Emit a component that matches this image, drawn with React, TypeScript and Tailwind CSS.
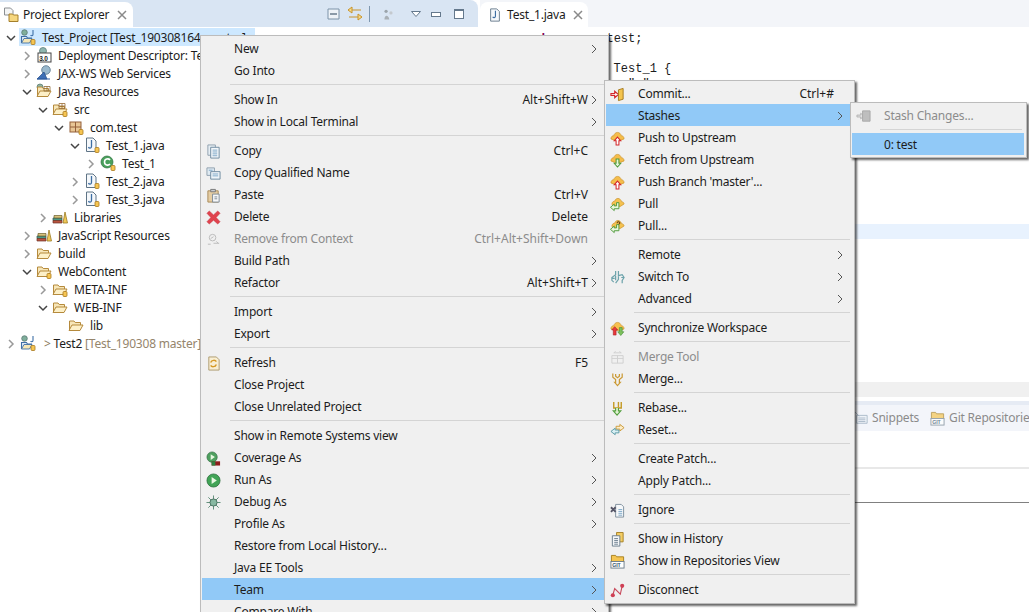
import type { ReactNode } from "react";

const Svg = ({ children, className = "w-4 h-4" }: { children: ReactNode; className?: string }) => (
  <svg viewBox="0 0 16 16" className={`${className} shrink-0`} fill="none">
    {children}
  </svg>
);

const Badge = () => <rect x="11" y="10.5" width="4" height="5" rx="1" fill="#f6c552" stroke="#a8791f" strokeWidth="0.8" />;
const Jay = ({ x = 0, y = 0 }: { x?: number; y?: number }) => (
  <path d={`M${8.5 + x} ${3 + y}V${9.5 + y}C${8.5 + x} ${11.5 + y} ${6 + x} ${11.5 + y} ${5.5 + x} ${10 + y}`} stroke="#3e6ea3" strokeWidth="1.3" />
);
const FolderBase = () => (
  <>
    <path d="M1.5 13.5V4h4.5l1.2 1.5h5.3V8" stroke="#b58a3c" fill="#f7e6b8" />
    <path d="M1 13.5 4 8h11l-3 5.5z" fill="#fdf0c8" stroke="#b58a3c" />
  </>
);
const Cloud = ({ color = "#f5bd4b" }: { color?: string }) => (
  <path d="M1 8.5C1 5.500 3 5 4 5 4.500 3 6 1.500 8 1.500s3.600 1.500 4 3.500c1.500 0 3 1 3 3.500L11 10H5z" fill={color} stroke="#c98f25" strokeWidth="0.7" />
);
const Up = ({ x = 5 }: { x?: number }) => (
  <path d={`M${x + 3} 6.500l3.500 4h-2v4.500h-3v-4.500h-2z`} fill="#fff" stroke="#d3272b" strokeWidth="1.100" />
);
const Left = () => <path d="M7 7.500v3.500h-2.500v-2l-4 3.500 4 3.500v-2h5v-6.500z" fill="#e8f7dc" stroke="#4f9a3c" strokeWidth="1" transform="translate(0 -1.500)" />;
const Gate = () => (
  <g>
    <circle cx="4.500" cy="3.500" r="2.800" fill="#7fae9b" stroke="#52706b" strokeWidth="0.7" />
    <path d="M13 1v4.500c0 1.500-2 1.500-2.300.5" stroke="#3f6fa6" strokeWidth="1.100" />
    <path d="M1.500 14V7.500h5l1 1.500h4.500" stroke="#3f6fa6" strokeWidth="1.100" fill="#dfeaf5" />
    <path d="M1.500 14 4 9.500h8l-2.500 4.500z" fill="#f6e7b6" stroke="#3f6fa6" strokeWidth="0.900" />
    <Badge />
  </g>
);
const Pkg = () => (
  <>
    <rect x="2" y="3" width="11" height="10" fill="#e8c695" stroke="#94603a" />
    <path d="M7.500 3v10M2 8h11" stroke="#94603a" />
  </>
);
const Books = () => (
  <>
    <path d="M1 9h9v2.500H1z" fill="#4d9a86" stroke="#33574e" strokeWidth="0.700" />
    <path d="M1 11.500h9V14H1z" fill="#b9543f" stroke="#6e3528" strokeWidth="0.700" />
    <path d="M2 6.500h8V9H2z" fill="#d6c27c" stroke="#6b5d2c" strokeWidth="0.700" />
    <path d="M11 14l2-11 2.500 11z" fill="#f0c858" stroke="#9c7b22" strokeWidth="0.800" />
  </>
);
const PullCloud = () => (
  <path d="M2 8c0-3 2-3.500 3-3.500.5-2 2-3 3.500-3s3.500 1.500 3.800 3.500c1.500 0 2.700 1 2.700 2.500L11 10H5z" fill="#f5c250" stroke="#c98f25" strokeWidth="0.700" />
);

const icons: Record<string, ReactNode> = {
  tab: (
    <>
      <path d="M1.500 1h6l2.500 2.500V8H1.500z" fill="#f4f5f5" stroke="#8b8f93" />
      <path d="M6 7h3.500l1 1H15v6.500H6z" fill="#f6d77f" stroke="#a57f2a" />
    </>
  ),
  project: <Gate />,
  deployment: (
    <>
      <circle cx="7" cy="4" r="3.500" fill="#8fb6b0" stroke="#5d7d7b" strokeWidth="0.800" />
      <rect x="2" y="6" width="13" height="9" fill="#fff" stroke="#444" />
      <text x="3.200" y="13.500" fontSize="6.500" fontWeight="700" fill="#222" fontFamily="Liberation Sans, sans-serif">3.0</text>
    </>
  ),
  jaxws: (
    <>
      <circle cx="10" cy="5" r="4.300" fill="#9ab9ce" stroke="#55748c" strokeWidth="0.800" />
      <path d="M1 14 8 7l3 7z" fill="#3e6fb5" stroke="#234a86" strokeWidth="0.700" />
      <path d="M1 14h13" stroke="#2e5ea6" />
    </>
  ),
  javaRes: (
    <>
      <circle cx="4" cy="4" r="3" fill="#8db3a3" stroke="#567367" strokeWidth="0.700" />
      <FolderBase />
      <path d="M8 3.500h6v4.500H8zM11 3.500V8" stroke="#8e6a36" strokeWidth="0.800" />
    </>
  ),
  src: (
    <>
      <FolderBase />
      <path d="M7 2.500h6v5H7zM10 2.500v5M7 5h6" stroke="#9b6d36" strokeWidth="0.800" />
      <Badge />
    </>
  ),
  pkg: (
    <>
      <Pkg />
      <Badge />
    </>
  ),
  java: (
    <>
      <path d="M2.500 1h6.500l3 3v10.500h-9.500z" fill="#f5f8fb" stroke="#5f7486" />
      <Jay x={-1} />
      <Badge />
    </>
  ),
  cls: (
    <>
      <circle cx="7" cy="7" r="6" fill="#49a05c" stroke="#2d6e3d" strokeWidth="0.700" />
      <path d="M10 5C8.500 3 4.500 3.800 4.500 7s4 4 5.500 2" stroke="#fff" strokeWidth="1.600" />
      <Badge />
    </>
  ),
  libs: <Books />,
  folderOpen: <FolderBase />,
  folderBadge: (
    <>
      <FolderBase />
      <Badge />
    </>
  ),
  copy: (
    <>
      <path d="M2 1h8v11H2z" fill="#e6eef4" stroke="#8fa0ae" />
      <path d="M5 3.500h9V15H5z" fill="#f3f7fa" stroke="#6e8aa0" />
      <path d="M7 6.500h5M7 8.500h5M7 10.500h5M7 12.500h5" stroke="#7da6c6" />
    </>
  ),
  copyQ: (
    <>
      <path d="M1 2h8v8H1z" fill="#dfeaf2" stroke="#8fa0ae" />
      <path d="M5 6h10v8H5z" fill="#eef4f9" stroke="#6e8aa0" />
      <path d="M7 8.500h6M7 10.500h6M3 4.500h4" stroke="#7da6c6" />
    </>
  ),
  paste: (
    <>
      <path d="M2 3h11v12H2z" fill="#e5cda3" stroke="#a98a57" />
      <path d="M5 1.500h5V4H5z" fill="#c8ccd0" stroke="#777" />
      <path d="M7 6.500h7V15H7z" fill="#f7f8f9" stroke="#7d8a95" />
      <path d="M9 9.500h3M9 11.500h3" stroke="#7d8a95" />
    </>
  ),
  del: <path d="M3.500 1 8 5.200 12.500 1 15 3.500 10.800 8 15 12.500 12.500 15 8 10.800 3.500 15 1 12.500 5.200 8 1 3.500z" fill="#e0434e" stroke="#c0303a" strokeWidth="0.500" />,
  remove: (
    <g stroke="#b9b9b9">
      <circle cx="7" cy="6" r="3.500" />
      <path d="M5 7l3-2M2 13h3M8 12h6M11 10l2 2" />
    </g>
  ),
  refresh: (
    <>
      <path d="M3 1h8l3 3v11H3z" fill="#f9efd3" stroke="#ad9a6d" />
      <path d="M5 7c1-3 5-3 6-1M11 9c-1 3-5 3-6 1" stroke="#d69a25" strokeWidth="1.500" />
    </>
  ),
  coverage: (
    <>
      <circle cx="6.500" cy="6.500" r="5.500" fill="#4ea05f" stroke="#2e6a3e" strokeWidth="0.700" />
      <path d="M5 3.500 9.500 6.500 5 9.500z" fill="#e6f7df" />
      <rect x="6" y="11" width="9" height="4.500" fill="#8f1c1c" />
      <rect x="6" y="11" width="4" height="4.500" fill="#2f8040" />
    </>
  ),
  run: (
    <>
      <circle cx="8" cy="8" r="7" fill="#41a456" stroke="#2b6e3c" strokeWidth="0.800" />
      <path d="M6 4.200 11.500 8 6 11.800z" fill="#e9f8e4" />
    </>
  ),
  debug: (
    <>
      <path d="M8 .5v15M.5 8h15M2.500 2.500l11 11M13.500 2.500l-11 11" stroke="#5c8b76" />
      <circle cx="8" cy="8" r="3.800" fill="#88b8a2" stroke="#46705e" />
    </>
  ),
  commit: (
    <>
      <path d="M1 7h4V4.500L9 8l-4 3.500V9H1z" fill="#fff" stroke="#d3272b" strokeWidth="1.200" />
      <path d="M9 3 14 1.500V13l-5 1.500z" fill="#f4c44d" stroke="#a57a1d" />
    </>
  ),
  stash: (
    <g opacity="0.7">
      <path d="M1 6.500h4V4.500l3.500 3-3.500 3V8.500H1z" fill="#ddd" stroke="#9a9a9a" />
      <path d="M7 2h8v11H7z" fill="#a9a9a9" stroke="#8b8b8b" />
    </g>
  ),
  push: (
    <>
      <Cloud />
      <Up />
    </>
  ),
  fetch: (
    <>
      <Cloud />
      <path d="M6.500 6.500h3V11h2L8 15l-3.500-4h2z" fill="#e6f7d8" stroke="#4f9a3c" strokeWidth="1.100" />
    </>
  ),
  pull: (
    <>
      <PullCloud />
      <Left />
    </>
  ),
  pullQ: (
    <>
      <PullCloud />
      <path d="M7.500 4.500c0-2 3-2 3-.2 0 1-1.500 1-1.500 2.200M9 7.500v1" stroke="#5b3a11" strokeWidth="1.100" />
      <Left />
    </>
  ),
  switchTo: <path d="M6 1v4L2 8v3l2 2M2 9h3M9 1v5l4-1 2 3-2 3v3M9 6v4l-3 4M6 6v5M12 8h3" stroke="#6da3ab" strokeWidth="1.300" />,
  sync: (
    <>
      <Cloud color="#f6c04e" />
      <path d="M5 6l3.200 3.500H6.500V15h-3V9.500H1.800z" fill="#e8383c" stroke="#a81e22" strokeWidth="0.600" />
      <path d="M10 7h3v4.500h1.800L11.500 15.500 8.200 11.500H10z" fill="#7cc05c" stroke="#3f8a2f" strokeWidth="0.600" />
    </>
  ),
  mergeTool: (
    <g stroke="#cfcfcf">
      <path d="M2 6h12v8H2zM8 6v8M2 9h12" />
      <path d="M4 3h8M4 3l2-1.500M12 3l-2-1.500" />
    </g>
  ),
  merge: <path d="M3 1.500v4l3 2.500v3h-1l3 3.500 3-3.500h-1V8l3-2.500v-4M6 2v2.500L8 6l2-1.500V2" stroke="#cb9a35" strokeWidth="1.300" />,
  rebase: (
    <>
      <path d="M4 1v6.500h8V1" stroke="#c49a25" strokeWidth="1.500" />
      <path d="M9 1v6" stroke="#c49a25" strokeWidth="1.500" />
      <path d="M6 7.500v3H3.500L7.500 15l4-4.500H9v-3" fill="#e4f3d6" stroke="#54a03f" strokeWidth="1.200" />
    </>
  ),
  reset: (
    <>
      <path d="M6.500 3.500h4V1.500L15 5l-4.500 3.500V6.500h-4z" fill="#fbedc9" stroke="#cc9a3a" />
      <path d="M9.500 7.500h-4V5.500L1 9l4.500 3.500V10.500h4z" fill="#d9eff3" stroke="#5a9aa5" />
    </>
  ),
  ignore: (
    <>
      <path d="M6 1.500h6l2.500 2.500v11H6z" fill="#f6f8fa" stroke="#7e8f9d" />
      <path d="M9 7h4M9 9h4M9 11h4M9 13h4" stroke="#7da6c6" />
      <path d="M1 4.500l5 5M6 4.500l-5 5" stroke="#556" strokeWidth="2" />
    </>
  ),
  history: (
    <>
      <path d="M7 .5h7v10H7z" fill="#f4cd63" stroke="#a47f23" />
      <path d="M2.500 4h8v11h-8z" fill="#f4f6f8" stroke="#6a7d8d" />
      <path d="M4.500 7h4M4.500 9h4M4.500 11h4M4.500 13h4" stroke="#6a7d8d" />
    </>
  ),
  repos: (
    <>
      <path d="M1.500 8V1.500h4.500l1 1.500h7.500v5z" fill="#f5c551" stroke="#a6801f" />
      <rect x="1" y="8" width="14" height="7" fill="#fff" stroke="#6e7e8b" />
      <text x="2.500" y="13.800" fontSize="5.600" fontWeight="700" fill="#36556d" fontFamily="Liberation Sans, sans-serif">GIT</text>
    </>
  ),
  disconnect: (
    <>
      <path d="M3 13 5 6l6 6 2-9" stroke="#c7485a" strokeWidth="1.200" />
      <circle cx="3" cy="13" r="2.200" fill="#cf4055" />
      <circle cx="13" cy="3" r="2.200" fill="#cf4055" />
    </>
  ),
  snippets: (
    <g opacity="0.65">
      <path d="M3 5h12v9H3z" fill="#eef3f8" stroke="#7f96ab" />
      <path d="M1 1l5 5M5 8h8M5 10h8M5 12h8" stroke="#7f96ab" />
    </g>
  ),
};

type Row = { d: number; icon: string; label: string; open?: boolean; leaf?: boolean; extra?: ReactNode; selected?: boolean };

const tree: Row[] = [
  { d: 0, icon: "project", label: "Test_Project [Test_190308164 master]", open: true, selected: true },
  { d: 1, icon: "deployment", label: "Deployment Descriptor: Test_Project" },
  { d: 1, icon: "jaxws", label: "JAX-WS Web Services" },
  { d: 1, icon: "javaRes", label: "Java Resources", open: true },
  { d: 2, icon: "src", label: "src", open: true },
  { d: 3, icon: "pkg", label: "com.test", open: true },
  { d: 4, icon: "java", label: "Test_1.java", open: true },
  { d: 5, icon: "cls", label: "Test_1" },
  { d: 4, icon: "java", label: "Test_2.java" },
  { d: 4, icon: "java", label: "Test_3.java" },
  { d: 2, icon: "libs", label: "Libraries" },
  { d: 1, icon: "libs", label: "JavaScript Resources" },
  { d: 1, icon: "folderOpen", label: "build" },
  { d: 1, icon: "folderBadge", label: "WebContent", open: true },
  { d: 2, icon: "folderBadge", label: "META-INF" },
  { d: 2, icon: "folderOpen", label: "WEB-INF", open: true },
  { d: 3, icon: "folderOpen", label: "lib", leaf: true },
];

const Chevron = ({ open }: { open?: boolean }) => (
  <svg viewBox="0 0 10 10" className="w-[10px] h-[10px]" fill="none">
    {open ? <path d="M1 3l4 4 4-4" stroke="#444" strokeWidth="1.500" /> : <path d="M3 1l4 4-4 4" stroke="#999" strokeWidth="1.500" />}
  </svg>
);

function TreeRow({ d, icon, label, open, leaf, extra, selected }: Row) {
  return (
    <div className="flex items-center h-[18px] whitespace-nowrap" style={{ paddingLeft: 6 + 16 * d }}>
      <span className="w-[13px] flex justify-start pt-[2px]">{!leaf && <Chevron open={open} />}</span>
      <span className={`flex items-center h-[18px] pl-px gap-[6px] ${selected ? "bg-[#cde8ff] w-[236px]" : ""}`}>
        <Svg>{icons[icon]}</Svg>
        {extra}
        <span className="pt-[2px]">{label}</span>
      </span>
    </div>
  );
}

type Item = { label?: string; icon?: string; key?: string; arrow?: boolean; off?: boolean; on?: boolean };

const S: Item = {};
const teamMenu: Item[] = [
  { label: "New", arrow: true },
  { label: "Go Into" },
  S,
  { label: "Show In", key: "Alt+Shift+W", arrow: true },
  { label: "Show in Local Terminal", arrow: true },
  S,
  { label: "Copy", icon: "copy", key: "Ctrl+C" },
  { label: "Copy Qualified Name", icon: "copyQ" },
  { label: "Paste", icon: "paste", key: "Ctrl+V" },
  { label: "Delete", icon: "del", key: "Delete" },
  { label: "Remove from Context", icon: "remove", key: "Ctrl+Alt+Shift+Down", off: true },
  { label: "Build Path", arrow: true },
  { label: "Refactor", key: "Alt+Shift+T", arrow: true },
  S,
  { label: "Import", arrow: true },
  { label: "Export", arrow: true },
  S,
  { label: "Refresh", icon: "refresh", key: "F5" },
  { label: "Close Project" },
  { label: "Close Unrelated Project" },
  S,
  { label: "Show in Remote Systems view" },
  { label: "Coverage As", icon: "coverage", arrow: true },
  { label: "Run As", icon: "run", arrow: true },
  { label: "Debug As", icon: "debug", arrow: true },
  { label: "Profile As", arrow: true },
  { label: "Restore from Local History..." },
  { label: "Java EE Tools", arrow: true },
  { label: "Team", arrow: true, on: true },
  { label: "Compare With", arrow: true },
];

const gitMenu: Item[] = [
  { label: "Commit...", icon: "commit", key: "Ctrl+#" },
  { label: "Stashes", arrow: true, on: true },
  { label: "Push to Upstream", icon: "push" },
  { label: "Fetch from Upstream", icon: "fetch" },
  { label: "Push Branch 'master'...", icon: "push" },
  { label: "Pull", icon: "pull" },
  { label: "Pull...", icon: "pullQ" },
  S,
  { label: "Remote", arrow: true },
  { label: "Switch To", icon: "switchTo", arrow: true },
  { label: "Advanced", arrow: true },
  S,
  { label: "Synchronize Workspace", icon: "sync" },
  S,
  { label: "Merge Tool", icon: "mergeTool", off: true },
  { label: "Merge...", icon: "merge" },
  S,
  { label: "Rebase...", icon: "rebase" },
  { label: "Reset...", icon: "reset" },
  S,
  { label: "Create Patch..." },
  { label: "Apply Patch..." },
  S,
  { label: "Ignore", icon: "ignore" },
  S,
  { label: "Show in History", icon: "history" },
  { label: "Show in Repositories View", icon: "repos" },
  S,
  { label: "Disconnect", icon: "disconnect" },
];

const stashMenu: Item[] = [{ label: "Stash Changes...", icon: "stash", off: true }, S, { label: "0: test", on: true }];

function Menu({ items, className }: { items: Item[]; className: string }) {
  return (
    <div className={`absolute bg-[#f0f0f0] border border-[#bcbcbc] shadow-[2px_2px_2px_rgba(0,0,0,0.6)] pl-px pr-[2px] pt-px ${className}`}>
      {items.map((it, i) =>
        it.label ? (
          <div key={i} className={`flex items-center h-[22px] pt-[2px] whitespace-nowrap ${it.on ? "bg-[#91c9f7]" : ""} ${it.off ? "text-[#8c8c8c]" : ""}`}>
            <span className="w-[32px] pl-[4px] flex items-center">{it.icon && <Svg className="w-[15px] h-[15px]">{icons[it.icon]}</Svg>}</span>
            <span className="flex-1">{it.label}</span>
            {it.key && <span className="mr-[3px] tracking-normal">{it.key}</span>}
            <span className="w-[15px] flex">
              {it.arrow && (
                <svg viewBox="0 0 6 10" className="w-[6px] h-[10px]" fill="none">
                  <path d="M1 1l4 4-4 4" stroke="#555" />
                </svg>
              )}
            </span>
          </div>
        ) : (
          <div key={i} className="h-[7px] pl-[28px] pr-[2px] flex items-center">
            <div className="h-px w-full bg-[#d4d4d4]" />
          </div>
        ),
      )}
    </div>
  );
}

const code = [
  <>
    <b className="text-[#7f0055]">package</b> com.test;
  </>,
  "",
  <>
    <b className="text-[#7f0055]">public class</b> Test_1 {"{"}
  </>,
  '               " "',
];

export default function App() {
  return (
    <div className="relative w-[1029px] h-[612px] overflow-hidden bg-white flex text-[12px] tracking-[-0.2px] text-[#1c1c1c] font-['Noto_Sans',sans-serif]">
      <section className="w-[478px] shrink-0">
        <header className="h-[27px] flex items-end bg-[#d9e5f3] rounded-tr-lg">
          <div className="flex items-center gap-[4px] w-[133px] h-[25px] bg-white rounded-tr-lg pl-[3px] whitespace-nowrap">
            <Svg>{icons.tab}</Svg>
            <span>Project Explorer</span>
            <svg viewBox="0 0 10 10" className="w-[10px] h-[10px] ml-[4px]" fill="none">
              <path d="M1 1l8 8M9 1l-8 8" stroke="#8a8a8a" strokeWidth="1.500" />
            </svg>
          </div>
        </header>
        <div className="pt-px">
          {tree.map((r, i) => (
            <TreeRow key={i} {...r} />
          ))}
          <TreeRow
            d={0}
            icon="project"
            label=""
            extra={
              <span className="ml-[2px] pt-[2px] whitespace-pre">
                <span className="text-[#8a7a5c]">{"> "}</span>Test2 <span className="text-[#95856c]">[Test_190308 master]</span>
              </span>
            }
          />
        </div>
      </section>

      <section className="flex-1 flex flex-col pl-[2px]">
        <header className="h-[27px] flex items-end bg-[#f3f5f9]">
          <div className="flex items-center gap-[5px] w-[108px] h-[25px] bg-white rounded-t-lg pl-2 whitespace-nowrap">
            <Svg className="w-[14px] h-[14px]">
              <path d="M3 1h7l3 3v11H3z" fill="#f5f8fb" stroke="#5f7486" />
              <Jay />
            </Svg>
            <span>Test_1.java</span>
            <svg viewBox="0 0 10 10" className="w-[10px] h-[10px] ml-[2px]" fill="none">
              <path d="M1 1l8 8M9 1l-8 8" stroke="#8a8a8a" strokeWidth="1.500" />
            </svg>
          </div>
        </header>
        <div className="h-[355px] pt-[5px] tracking-normal font-['Liberation_Mono',monospace] leading-[15px] whitespace-pre">
          {code.map((l, i) => (
            <div key={i} className="h-[15px] pl-[40px]">
              {l}
            </div>
          ))}
          <div className="h-[15px] mt-[132px] bg-[#e8f2fe]" />
        </div>
        <div className="h-[15px] bg-[#f0f0f0]" />
        <div className="h-[4px]" />
        <div className="h-[30px] border-t-[4px] border-[#e6ebf4] bg-[#f3f5fa] flex items-center pl-[374px] gap-[4px] text-[#8b8b8b] whitespace-nowrap">
          <Svg className="w-[14px] h-[14px]">{icons.snippets}</Svg>
          <span className="mr-[7px]">Snippets</span>
          <Svg className="w-[15px] h-[15px] opacity-70">{icons.repos}</Svg>
          <span>Git Repositories</span>
        </div>
        <div className="h-[36px] border-b-2 border-[#e8e8e8] box-content" />
        <div className="h-[33px] border-b border-[#808080] box-content" />
      </section>

      {/* view toolbar */}
      <div className="absolute left-[326px] top-[6px] flex items-center h-[16px]">
        <Svg>
          <path d="M2 3h11v10H2z" fill="#eef3f8" stroke="#7c93a8" />
          <path d="M4 8h7" stroke="#55697c" strokeWidth="1.300" />
        </Svg>
        <Svg className="w-4 h-4 ml-[5px]">
          <path d="M5 4h9M1 4l4-3v6zM11 11H2M15 11l-4-3v6z" fill="#f4d98c" stroke="#c8942b" />
        </Svg>
        <div className="w-px h-[16px] bg-[#7f98b0] ml-[6px]" />
        <Svg className="w-[13px] h-[13px] ml-[12px]">
          <circle cx="5" cy="4" r="2" fill="#9ba4ab" />
          <circle cx="11" cy="6" r="2" fill="#c4c9ce" />
          <path d="M3 14c0-6 5-6 6 0z" fill="#a9b0b6" />
        </Svg>
        <svg viewBox="0 0 10 6" className="w-[10px] h-[6px] ml-[16px]" fill="none">
          <path d="M.5.5h9L5 5.500z" fill="#fff" stroke="#64788c" />
        </svg>
        <div className="w-[10px] h-[5px] border border-[#64788c] bg-white ml-[10px]" />
        <div className="w-[10px] h-[10px] border border-[#64788c] border-t-2 bg-white ml-[13px]" />
      </div>

      <Menu items={teamMenu} className="left-[200px] top-[35px] w-[409px]" />
      <Menu items={gitMenu} className="left-[604px] top-[80px] w-[251px] pb-[3px]" />
      <Menu items={stashMenu} className="left-[850px] top-[102px] w-[177px] pb-[2px]" />
    </div>
  );
}
